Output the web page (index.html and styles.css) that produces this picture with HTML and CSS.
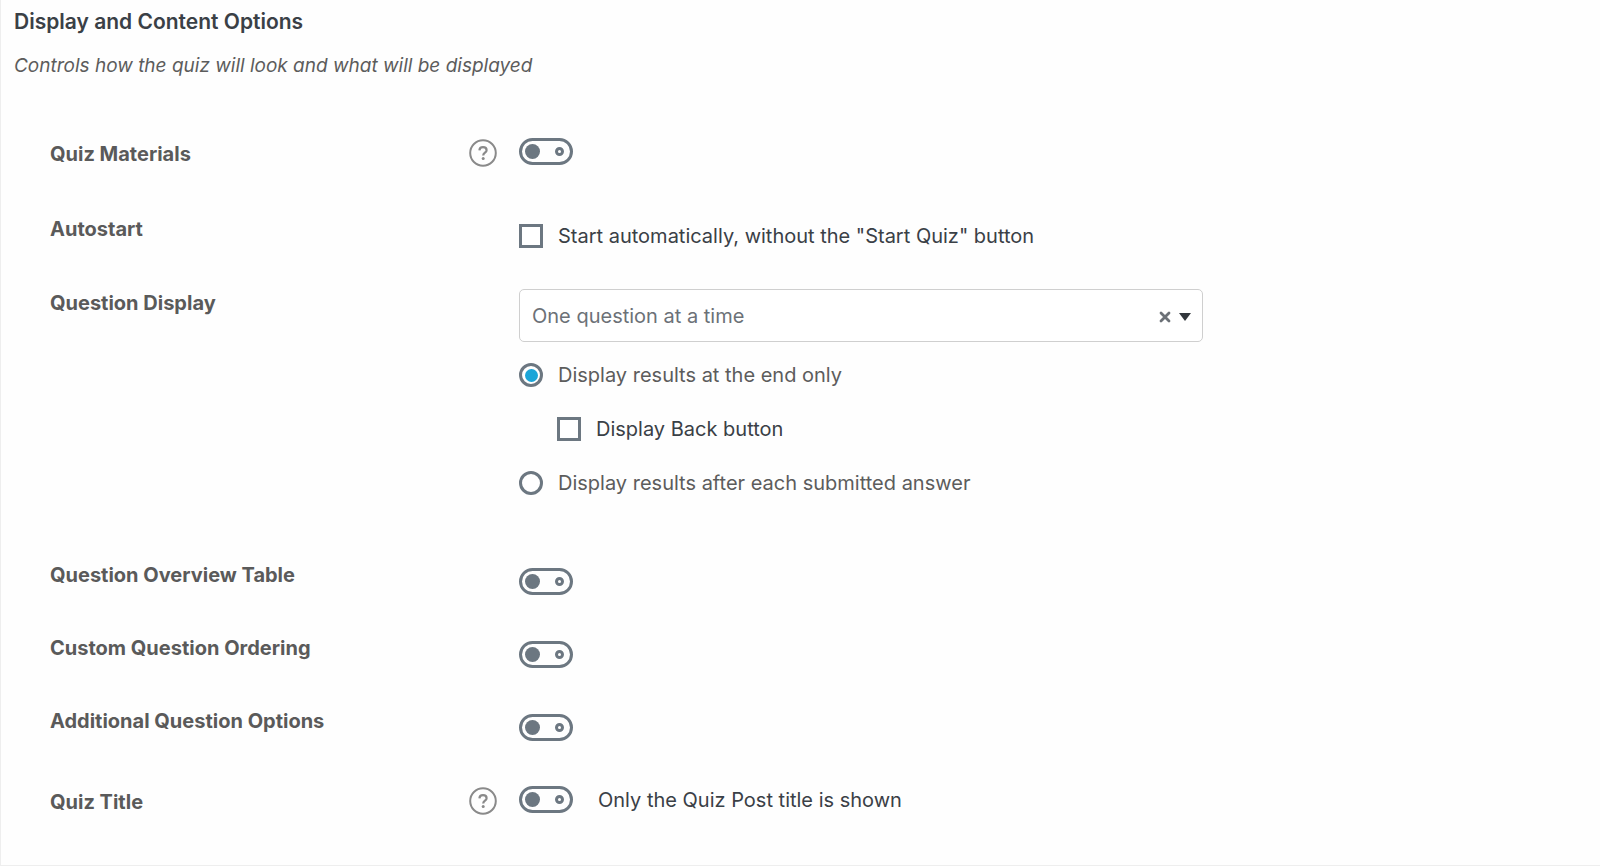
FILE: index.html
```
<!DOCTYPE html>
<html lang="en">
<head>
<meta charset="utf-8">
<title>Display and Content Options</title>
<link rel="stylesheet" href="styles.css">
</head>
<body>
<form class="panel">
  <header class="panel-header">
    <h2 class="panel-title">Display and Content Options</h2>
    <p class="panel-desc">Controls how the quiz will look and what will be displayed</p>
  </header>

  <div class="row row-help">
    <label class="row-label" for="materials">Quiz Materials</label>
    <button class="help" type="button" aria-label="Help for Quiz Materials">
      <svg viewBox="0 0 28 28" width="28" height="28" fill="none" stroke="currentColor">
        <circle cx="14" cy="14" r="12.8" stroke-width="2"/>
        <path d="M10.4 11.4C10.5 9.3 12 8.2 14 8.2s3.6 1.2 3.6 3c0 2.400-3.400 2.600-3.400 5.300" stroke-width="2.200"/>
        <circle cx="14.200" cy="19.600" r="1.500" fill="currentColor" stroke="none"/>
      </svg>
    </button>
    <div class="field"><input class="toggle" id="materials" type="checkbox" role="switch"></div>
  </div>

  <div class="row row-autostart">
    <span class="row-label">Autostart</span>
    <div class="field">
      <label class="choice"><input class="box" type="checkbox">Start automatically, without the "Start Quiz" button</label>
    </div>
  </div>

  <div class="row row-display">
    <label class="row-label" for="display">Question Display</label>
    <div class="field">
      <div class="select-wrap">
        <select class="select" id="display">
          <option>One question at a time</option>
          <option>All questions at once</option>
        </select>
        <button class="clear" type="button" aria-label="Clear">
          <svg viewBox="0 0 12 12" width="12" height="12" stroke="currentColor" stroke-width="2.800" stroke-linecap="round"><path d="M2 2l8 8M10 2l-8 8"/></svg>
        </button>
        <svg class="arrow" viewBox="0 0 12 8" width="12" height="8"><path d="M0 0h12L6 8z" fill="currentColor"/></svg>
      </div>
      <div class="choices">
        <label class="choice choice-muted"><input class="radio" type="radio" name="results" checked>Display results at the end only</label>
        <label class="choice choice-nested"><input class="box" type="checkbox">Display Back button</label>
        <label class="choice choice-muted"><input class="radio" type="radio" name="results">Display results after each submitted answer</label>
      </div>
    </div>
  </div>

  <div class="row row-toggle">
    <label class="row-label" for="overview">Question Overview Table</label>
    <div class="field"><input class="toggle" id="overview" type="checkbox" role="switch"></div>
  </div>

  <div class="row row-toggle">
    <label class="row-label" for="ordering">Custom Question Ordering</label>
    <div class="field"><input class="toggle" id="ordering" type="checkbox" role="switch"></div>
  </div>

  <div class="row row-toggle">
    <label class="row-label" for="additional">Additional Question Options</label>
    <div class="field"><input class="toggle" id="additional" type="checkbox" role="switch"></div>
  </div>

  <div class="row row-help">
    <label class="row-label" for="title">Quiz Title</label>
    <button class="help" type="button" aria-label="Help for Quiz Title">
      <svg viewBox="0 0 28 28" width="28" height="28" fill="none" stroke="currentColor">
        <circle cx="14" cy="14" r="12.8" stroke-width="2"/>
        <path d="M10.4 11.4C10.5 9.3 12 8.2 14 8.2s3.6 1.2 3.6 3c0 2.400-3.400 2.600-3.400 5.300" stroke-width="2.200"/>
        <circle cx="14.200" cy="19.600" r="1.500" fill="currentColor" stroke="none"/>
      </svg>
    </button>
    <div class="field field-inline">
      <input class="toggle" id="title" type="checkbox" role="switch">
      <span>Only the Quiz Post title is shown</span>
    </div>
  </div>
</form>
</body>
</html>
```
FILE: styles.css
```
*,
*::before,
*::after {
  box-sizing: border-box;
}

body {
  margin: 0;
  background: #fefefe;
  color: #3a4046;
  font: 20px/24px Inter, "Liberation Sans", sans-serif;
}

.panel {
  display: flex;
  flex-direction: column;
  gap: 39px;
  min-height: 100vh;
  padding: 10px 50px 0 49px;
  border-left: 1px solid #eee;
  border-bottom: 1px solid #eee;
}

.panel-header {
  margin-left: -36px;
  padding-bottom: 15px;
}

.panel-title {
  margin: 0 0 20px;
  font-size: 21px;
  line-height: 24px;
  font-weight: 600;
}

.panel-desc {
  margin: 0;
  color: #5c5c5c;
  font-size: 19px;
  font-style: italic;
}

.row {
  display: grid;
  grid-template-columns: 419px 50px minmax(0, 1fr);
  align-items: start;
}

.row-label {
  grid-column: 1;
  padding-top: 2px;
  color: #5a5a5a;
  font-weight: 650;
}

.field {
  grid-column: 3;
}

.row-help {
  padding: 6px 0 9px;
}

.row-help .row-label {
  padding-top: 4px;
}

.row-autostart {
  padding-bottom: 2px;
}

.row-autostart .field {
  padding-top: 9px;
}

.row-toggle .field {
  padding-top: 7px;
}

.row-display {
  padding-bottom: 27px;
}

.field-inline {
  display: flex;
  align-items: center;
  gap: 25px;
}

.help {
  width: 28px;
  height: 28px;
  margin-top: 1px;
  padding: 0;
  border: 0;
  background: none;
  color: #8a8a8a;
}

.help svg {
  display: block;
}

.toggle {
  appearance: none;
  display: flex;
  align-items: center;
  justify-content: space-between;
  width: 54px;
  height: 27px;
  margin: 0;
  padding: 0 6px 0 3px;
  border: 3px solid #6c7781;
  border-radius: 14px;
}

.toggle::before {
  content: "";
  width: 15px;
  height: 15px;
  border-radius: 50%;
  background: #6c7781;
}

.toggle::after {
  content: "";
  width: 9px;
  height: 9px;
  border: 3px solid #6c7781;
  border-radius: 50%;
}

.choice {
  display: flex;
  align-items: center;
  gap: 15px;
}

.choice-muted {
  color: #5c5c5c;
}

.choice-nested {
  margin-left: 38px;
}

.choices {
  display: flex;
  flex-direction: column;
  gap: 30px;
  padding-top: 21px;
}

.box,
.radio {
  appearance: none;
  display: grid;
  place-items: center;
  flex: none;
  width: 24px;
  height: 24px;
  margin: 0;
  border: 3px solid #6c7781;
  background: #fff;
}

.radio {
  border-radius: 50%;
}

.radio:checked::before {
  content: "";
  width: 13px;
  height: 13px;
  border-radius: 50%;
  background: #1ba5d8;
}

.select-wrap {
  position: relative;
  max-width: 684px;
}

.select {
  appearance: none;
  display: block;
  width: 100%;
  height: 53px;
  padding: 0 60px 0 12px;
  border: 1px solid #cfcfcf;
  border-radius: 5px;
  background: #fff;
  color: #6c7177;
  font: inherit;
}

.clear {
  position: absolute;
  top: 22px;
  right: 32px;
  padding: 0;
  border: 0;
  background: none;
  color: #6c7177;
}

.clear svg {
  display: block;
}

.arrow {
  position: absolute;
  top: 24px;
  right: 12px;
  color: #32373c;
  pointer-events: none;
}
```
